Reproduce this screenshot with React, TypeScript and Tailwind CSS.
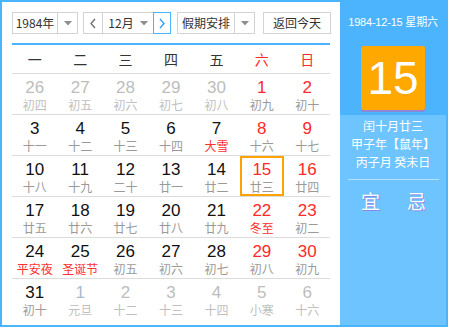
import React from "react";

type Cell = {
  d: number;
  l: string;
  other?: boolean;
  red?: boolean;
  fest?: boolean;
  today?: boolean;
  blue?: boolean;
};

const rows: Cell[][] = [
  [
    { d: 26, l: "初四", other: true },
    { d: 27, l: "初五", other: true },
    { d: 28, l: "初六", other: true },
    { d: 29, l: "初七", other: true },
    { d: 30, l: "初八", other: true },
    { d: 1, l: "初九", red: true },
    { d: 2, l: "初十", red: true },
  ],
  [
    { d: 3, l: "十一" },
    { d: 4, l: "十二" },
    { d: 5, l: "十三" },
    { d: 6, l: "十四" },
    { d: 7, l: "大雪", fest: true },
    { d: 8, l: "十六", red: true },
    { d: 9, l: "十七", red: true },
  ],
  [
    { d: 10, l: "十八" },
    { d: 11, l: "十九" },
    { d: 12, l: "二十" },
    { d: 13, l: "廿一" },
    { d: 14, l: "廿二" },
    { d: 15, l: "廿三", red: true, today: true },
    { d: 16, l: "廿四", red: true },
  ],
  [
    { d: 17, l: "廿五" },
    { d: 18, l: "廿六" },
    { d: 19, l: "廿七" },
    { d: 20, l: "廿八" },
    { d: 21, l: "廿九" },
    { d: 22, l: "冬至", red: true, fest: true },
    { d: 23, l: "初二", red: true },
  ],
  [
    { d: 24, l: "平安夜", fest: true },
    { d: 25, l: "圣诞节", fest: true },
    { d: 26, l: "初五" },
    { d: 27, l: "初六" },
    { d: 28, l: "初七" },
    { d: 29, l: "初八", red: true },
    { d: 30, l: "初九", red: true },
  ],
  [
    { d: 31, l: "初十" },
    { d: 1, l: "元旦", other: true, blue: true },
    { d: 2, l: "十二", other: true },
    { d: 3, l: "十三", other: true },
    { d: 4, l: "十四", other: true },
    { d: 5, l: "小寒", other: true },
    { d: 6, l: "十六", other: true },
  ],
];

const weeks = ["一", "二", "三", "四", "五", "六", "日"];

const CN = { fontFamily: '"Noto Sans CJK SC", "Liberation Sans", sans-serif' };
const NUM = { fontFamily: '"Liberation Sans", Arial, "Noto Sans CJK SC", sans-serif' };

function Caret() {
  return (
    <svg width="8" height="5" viewBox="0 0 8 5">
      <path d="M0 0 H8 L4 4.5 Z" fill="#8e8e8e" />
    </svg>
  );
}

function DayCell({ c }: { c: Cell }) {
  const numColor = c.other
    ? c.blue
      ? "text-[#a9bccf]"
      : "text-[#bdbdbd]"
    : c.red
    ? "text-[#ff2a2a]"
    : "text-[#111]";
  const lunarColor = c.fest
    ? "text-[#ff3030]"
    : c.other
    ? "text-[#c0c0c0]"
    : "text-[#9a9a9a]";
  return (
    <div className="h-[40px] flex items-stretch justify-stretch px-[1px]">
      <div
        className={
          "flex-1 flex flex-col items-center " +
          (c.today ? "border-2 border-[#ffa200] pt-[2px]" : "pt-[4px]")
        }
      >
        <div className={"text-[17px] leading-[19px] " + numColor} style={NUM}>
          {c.d}
        </div>
        <div className={"text-[12px] leading-[14px] mt-[1px] whitespace-nowrap " + lunarColor} style={CN}>
          {c.l}
        </div>
      </div>
    </div>
  );
}

export default function App() {
  return (
    <div className="w-[448px] h-[327px] border-2 border-[#4bb4fd] flex bg-white">
      <div className="w-[338px] pl-[10px] pt-[10px]">
        {/* controls */}
        <div className="flex items-center h-[22px] text-[12px] text-[#333]" style={CN}>
          <div className="w-[66px] h-[22px] border border-[#d3d3d3] flex">
            <div className="w-[45px] flex items-center justify-center border-r border-[#d3d3d3]">
              1984年
            </div>
            <div className="flex-1 flex items-center justify-center">
              <Caret />
            </div>
          </div>
          <div className="ml-[5px] flex h-[22px]">
            <div className="w-[20px] border border-[#d3d3d3] flex items-center justify-center">
              <svg width="8" height="11" viewBox="0 0 8 11">
                <path d="M6 1 L2 5.5 L6 10" stroke="#666" strokeWidth="1.2" fill="none" />
              </svg>
            </div>
            <div className="w-[50px] border-y border-[#d3d3d3] flex items-center justify-center gap-[6px]">
              <span>12月</span>
              <Caret />
            </div>
            <div className="w-[18px] border border-[#4bb4fd] flex items-center justify-center">
              <svg width="8" height="11" viewBox="0 0 8 11">
                <path d="M2 1 L6 5.5 L2 10" stroke="#2f9bf0" strokeWidth="1.3" fill="none" />
              </svg>
            </div>
          </div>
          <div className="ml-[6px] w-[78px] h-[22px] border border-[#d3d3d3] flex">
            <div className="w-[57px] flex items-center justify-center border-r border-[#d3d3d3]">
              假期安排
            </div>
            <div className="flex-1 flex items-center justify-center">
              <Caret />
            </div>
          </div>
          <div className="ml-[8px] w-[68px] h-[22px] border border-[#d3d3d3] flex items-center justify-center">
            返回今天
          </div>
        </div>

        {/* calendar */}
        <div className="w-[318px] mt-[9px] border-t-2 border-[#4bb4fd]">
          <div className="grid grid-cols-7 h-[29px] border-b border-[#dcdcdc] text-[14px]" style={CN}>
            {weeks.map((w, i) => (
              <div
                key={w}
                className={
                  "flex items-center justify-center " + (i >= 5 ? "text-[#ff2a2a]" : "text-[#333]")
                }
              >
                {w}
              </div>
            ))}
          </div>
          {rows.map((r, ri) => (
            <div
              key={ri}
              className={"grid grid-cols-7 " + (ri < rows.length - 1 ? "border-b border-[#dcdcdc]" : "")}
            >
              {r.map((c, ci) => (
                <DayCell key={ci} c={c} />
              ))}
            </div>
          ))}
        </div>
      </div>

      {/* right panel */}
      <div className="w-[106px] flex flex-col text-white" style={CN}>
        <div className="bg-[#4bb4fd] h-[113px] flex flex-col items-center">
          <div className="mt-[11px] text-[11px] leading-[16px] whitespace-nowrap tracking-[-0.2px]" style={NUM}>
            1984-12-15 <span style={CN}>星期六</span>
          </div>
          <div className="mt-[16px] w-[64px] h-[64px] bg-[#ffa800] rounded-[2px] shadow-[0_2px_0_#8f86d6] flex items-center justify-center">
            <span className="text-[46px] leading-none text-white" style={NUM}>
              15
            </span>
          </div>
        </div>
        <div className="flex-1 bg-[#6dc4ff] flex flex-col items-center">
          <div className="mt-[2px] text-[12px] leading-[18px] text-center">
            <div>闰十月廿三</div>
            <div>甲子年【鼠年】</div>
            <div>丙子月 癸未日</div>
          </div>
          <div className="mt-[8px] w-[91px] h-[1px] bg-[#b5e1ff]" />
          <div className="mt-[10px] ml-[1px] flex gap-[27px] text-[19px] leading-[22px] [text-shadow:1px_1px_0_#8a88e8]">
            <span>宜</span>
            <span>忌</span>
          </div>
        </div>
      </div>
    </div>
  );
}
